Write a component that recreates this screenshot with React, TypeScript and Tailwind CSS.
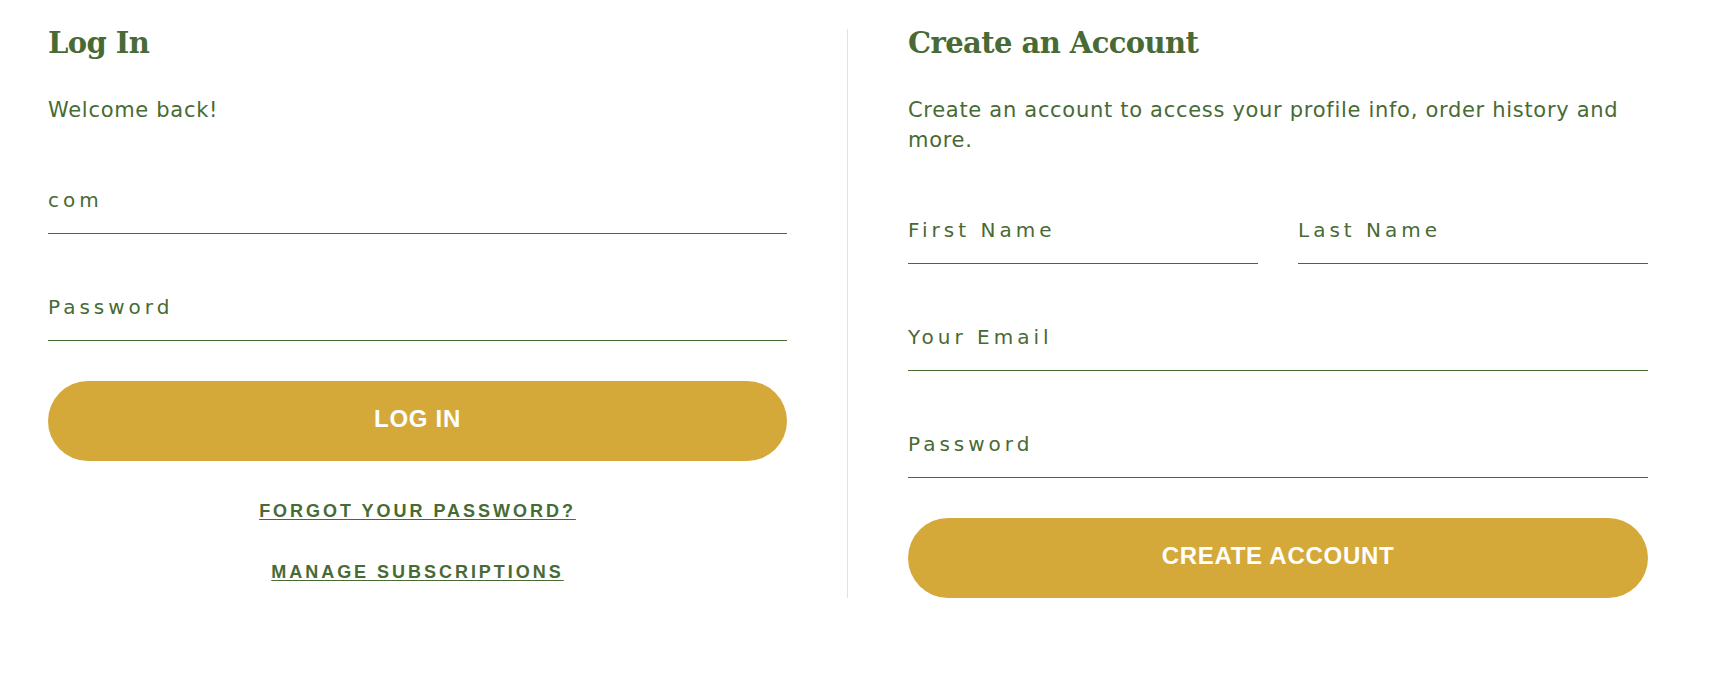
import React from 'react';

const green = 'text-[#486a34]';

const Field = ({ label, className = '' }: { label: string; className?: string }) => (
  <div
    className={`h-[107px] border-b border-[#486a34] flex items-end pb-[21px] ${className}`}
  >
    <span className={`text-[20px] leading-[24px] tracking-[0.2em] ${green}`}>{label}</span>
  </div>
);

const PillButton = ({ children }: { children: React.ReactNode }) => (
  <button
    type="button"
    className="mt-[40px] w-full h-[80px] pb-[4px] rounded-full bg-[#d4a93a] text-white text-[24px] font-bold uppercase tracking-[0.03em] font-['Liberation_Sans',Arial,sans-serif]"
  >
    {children}
  </button>
);

const TextLink = ({ children, className = '' }: { children: React.ReactNode; className?: string }) => (
  <a
    href="#"
    className={`block text-center text-[18px] leading-[24px] font-bold uppercase tracking-[0.165em] underline underline-offset-2 font-['Liberation_Sans',Arial,sans-serif] ${green} ${className}`}
  >
    {children}
  </a>
);

export default function App() {
  return (
    <div className="w-[1712px] h-[692px] bg-white font-['DejaVu_Sans',sans-serif]">
      <div className="flex items-stretch pl-[48px] pt-[29px]">
        {/* login */}
        <div className="w-[739px]">
          <h1 className={`text-[29px] leading-[29px] font-bold font-['DejaVu_Serif',serif] tracking-[-0.02em] ${green}`}>
            Log In
          </h1>
          <p className={`mt-[37px] text-[21px] leading-[30px] tracking-[0.7px] ${green}`}>Welcome back!</p>
          <Field label="com" className="mt-[2px]" />
          <Field label="Password" />
          <PillButton>Log In</PillButton>
          <TextLink className="mt-[38px]">Forgot your password?</TextLink>
          <TextLink className="mt-[37px]">Manage subscriptions</TextLink>
        </div>

        <div className="mx-[60px] w-px bg-[#e2e2e2]" />

        {/* register */}
        <div className="w-[740px]">
          <h2 className={`text-[29px] leading-[29px] font-bold font-['DejaVu_Serif',serif] tracking-[-0.02em] ${green}`}>
            Create an Account
          </h2>
          <p className={`mt-[37px] text-[21px] leading-[30px] tracking-[0.7px] ${green}`}>
            Create an account to access your profile info, order history and more.
          </p>
          <div className="grid grid-cols-2 gap-[40px] mt-[2px]">
            <Field label="First Name" />
            <Field label="Last Name" />
          </div>
          <Field label="Your Email" />
          <Field label="Password" />
          <PillButton>Create Account</PillButton>
        </div>
      </div>
    </div>
  );
}
